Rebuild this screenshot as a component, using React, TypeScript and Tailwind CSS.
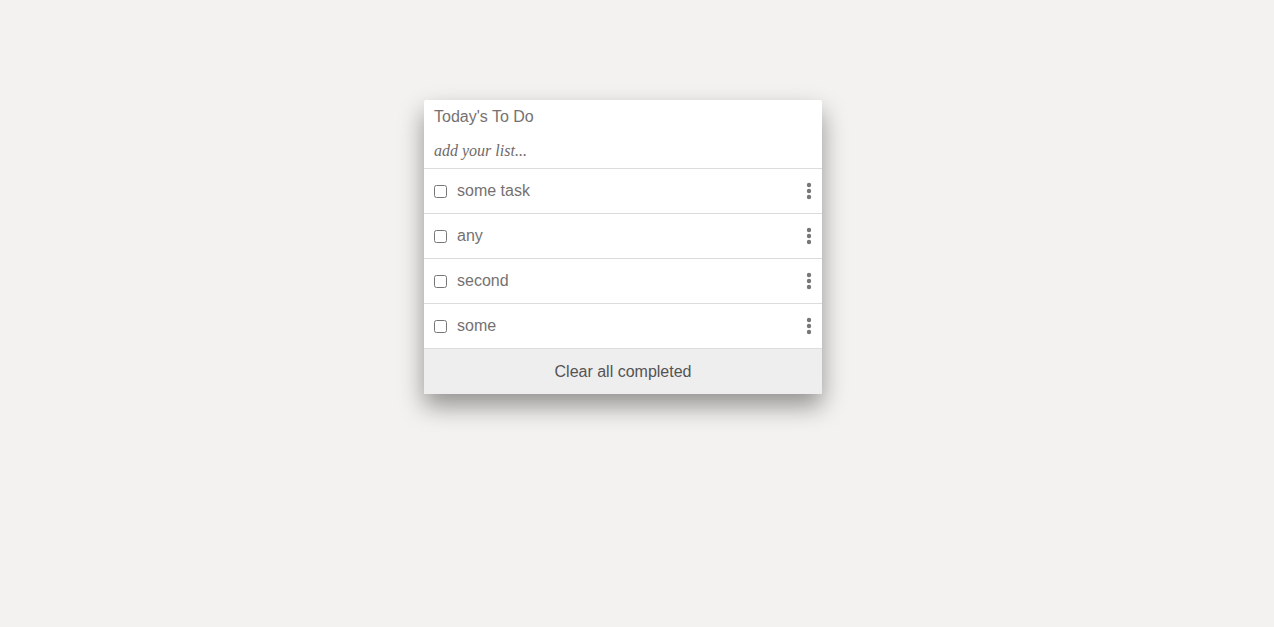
const tasks = ["some task", "any", "second", "some"];

function Kebab() {
  return (
    <svg width="6" height="18" viewBox="0 0 6 18" className="text-[#777]">
      <circle cx="3" cy="3" r="2.2" fill="currentColor" />
      <circle cx="3" cy="9" r="2.2" fill="currentColor" />
      <circle cx="3" cy="15" r="2.2" fill="currentColor" />
    </svg>
  );
}

export default function App() {
  return (
    <div className="min-h-screen bg-[#f3f2f0] pt-[100px] font-['Liberation_Sans',Arial,sans-serif]">
      <div className="ml-[424px] w-[398px] bg-white rounded-[2px] shadow-[0_12px_24px_rgba(0,0,0,0.4)]">
        <div className="px-[10px] pt-[7px] h-[33px] text-[16px] leading-[20px] text-[#767171]">
          Today's To Do
        </div>
        <div className="h-[36px] flex items-center px-[10px] border-b border-[#dcdcdc]">
          <input
            placeholder="add your list..."
            className="w-full outline-none italic text-[16px] font-['Liberation_Serif','Times_New_Roman',serif] placeholder:text-[#6f6a6a]"
          />
        </div>
        {tasks.map((t) => (
          <div
            key={t}
            className="h-[45px] flex items-center pl-[10px] pr-[10px] border-b border-[#dcdcdc]"
          >
            <input type="checkbox" className="w-[13px] h-[13px] m-0 accent-[#767676]" />
            <span className="ml-[10px] flex-1 text-[16px] text-[#767171]">{t}</span>
            <Kebab />
          </div>
        ))}
        <div className="h-[45px] flex items-center justify-center bg-[#eeeeee] text-[16px] text-[#555353]">
          Clear all completed
        </div>
      </div>
    </div>
  );
}
